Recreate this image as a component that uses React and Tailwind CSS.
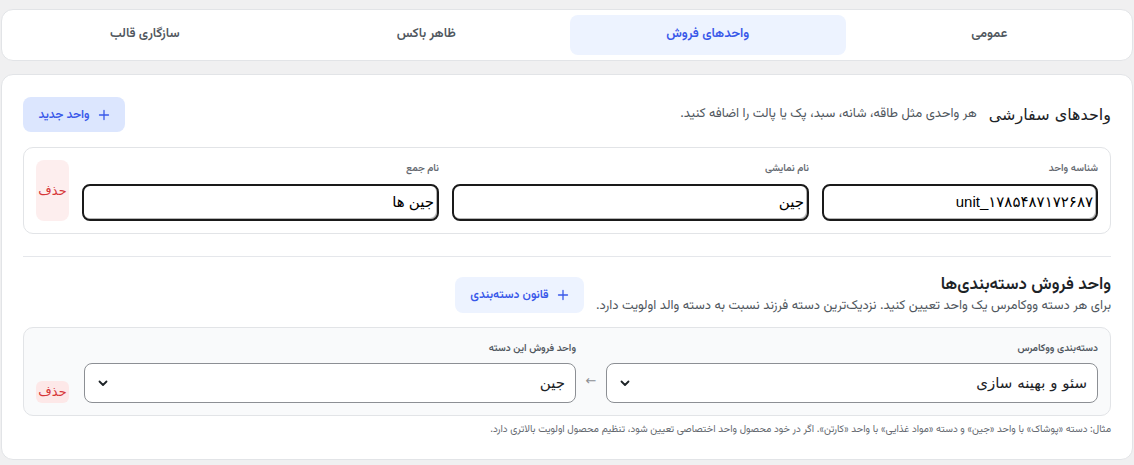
import React from "react";

const font = { fontFamily: '"Vazirmatn", "Noto Sans Arabic", "DejaVu Sans", sans-serif' };

function Chevron() {
  return (
    <svg width="12" height="12" viewBox="0 0 12 12" fill="none">
      <path d="M2.5 4.5 L6 8 L9.5 4.5" stroke="#1d2327" strokeWidth="1.8" strokeLinecap="round" strokeLinejoin="round" />
    </svg>
  );
}

function Plus() {
  return (
    <svg width="12" height="12" viewBox="0 0 12 12" fill="none">
      <path d="M6 1.5 V10.5 M1.5 6 H10.5" stroke="currentColor" strokeWidth="1.3" strokeLinecap="round" />
    </svg>
  );
}

function Field({ label, value }) {
  return (
    <div className="flex flex-col">
      <div className="h-[24px] text-[10px] font-semibold text-[#646970] leading-[14px] pt-[2px]">{label}</div>
      <div className="h-[37px] rounded-lg border-2 border-[#1a1a1a] bg-white flex items-center px-[3px] text-[15px] text-black shadow-[inset_-1px_-1px_0_#b5b5b5]" style={{ fontFamily: '"Liberation Sans", "DejaVu Sans", sans-serif' }}>
        <span dir="rtl">{value}</span>
      </div>
    </div>
  );
}

function SelectBox({ label, value }) {
  return (
    <div className="flex-1 flex flex-col">
      <div className="h-[23px] text-[10px] font-semibold text-[#50575e] leading-[14px] pt-[2px]">{label}</div>
      <div className="h-10 rounded-lg border border-[#8c8f94] bg-white flex items-center justify-between pr-[10px] pl-3 text-[15px] text-[#1d2327]">
        <span style={{ fontFamily: '"DejaVu Sans", sans-serif' }}>{value}</span>
        <Chevron />
      </div>
    </div>
  );
}

export default function App() {
  return (
    <div dir="rtl" className="min-h-[465px] w-[1134px] bg-[#f0f0f1] px-[1px] pt-[9px]" style={font}>
      {/* Tabs */}
      <div className="bg-white border border-[#e2e4e7] rounded-xl p-[5px] grid grid-cols-4 gap-[6px]">
        {["عمومی", "واحدهای فروش", "ظاهر باکس", "سازگاری قالب"].map((t, i) => (
          <div
            key={t}
            className={
              "h-10 rounded-lg flex items-center justify-center text-[13px] font-semibold " +
              (i === 1 ? "bg-[#edf3ff] text-[#3858e9]" : "text-[#50575e]")
            }
          >
            {t}
          </div>
        ))}
      </div>

      {/* Main card */}
      <div className="mt-[13px] bg-white border border-[#e2e4e7] rounded-xl px-[21px] pt-[22px] pb-[22px]">
        <div className="flex items-center justify-between h-[35px]">
          <div className="flex items-center gap-3">
            <h2 className="text-[16px] font-medium text-[#1d2327]" style={{ fontFamily: '"DejaVu Sans", sans-serif' }}>واحدهای سفارشی</h2>
            <p className="text-[13px] text-[#50575e]">هر واحدی مثل طاقه، شانه، سبد، پک یا پالت را اضافه کنید.</p>
          </div>
          <button className="h-[35px] w-[102px] rounded-lg bg-[#dce6fe] text-[#3858e9] text-[12px] font-semibold flex items-center justify-center gap-2">
            <Plus />
            <span>واحد جدید</span>
          </button>
        </div>

        <div className="mt-[15px] border border-[#e2e4e7] rounded-[10px] p-3 grid grid-cols-[276px_1fr_1fr_33px] gap-[13px]">
          <Field label="شناسه واحد" value="unit_۱۷۸۵۴۸۷۱۷۲۶۸۷" />
          <Field label="نام نمایشی" value="جین" />
          <Field label="نام جمع" value="جین ها" />
          <button className="rounded-lg bg-[#fdeeee] text-[#d63638] text-[13px] flex items-center justify-center" style={{ fontFamily: '"DejaVu Sans", sans-serif' }}>
            حذف
          </button>
        </div>

        <div className="mt-[22px] border-t border-[#e5e7eb]" />

        <div className="mt-[17px] flex items-center gap-3">
          <div>
            <h3 className="text-[17px] leading-[22px] font-semibold text-[#1d2327]">واحد فروش دسته‌بندی‌ها</h3>
            <p className="text-[13px] leading-[20px] text-[#50575e]">برای هر دسته ووکامرس یک واحد تعیین کنید. نزدیک‌ترین دسته فرزند نسبت به دسته والد اولویت دارد.</p>
          </div>
          <button className="h-9 w-[129px] rounded-lg bg-[#edf3ff] text-[#3858e9] text-[12px] font-semibold flex items-center justify-center gap-2">
            <Plus />
            <span>قانون دسته‌بندی</span>
          </button>
        </div>

        <div className="mt-[11px] bg-[#f9fafb] border border-[#e2e4e7] rounded-[10px] p-3 flex items-end gap-2">
          <SelectBox label="دسته‌بندی ووکامرس" value="سئو و بهینه سازی" />
          <div className="h-10 w-[14px] flex items-center justify-center text-[#8c8f94] text-[13px]">←</div>
          <SelectBox label="واحد فروش این دسته" value="جین" />
          <button className="mr-[7px] h-[22px] w-[33px] rounded-md bg-[#fde8e8] text-[#d63638] text-[13px] flex items-center justify-center" style={{ fontFamily: '"DejaVu Sans", sans-serif' }}>
            حذف
          </button>
        </div>

        <p className="mt-[6px] text-[10px] text-[#646970]">
          مثال: دسته «پوشاک» با واحد «جین» و دسته «مواد غذایی» با واحد «کارتن». اگر در خود محصول واحد اختصاصی تعیین شود، تنظیم محصول اولویت بالاتری دارد.
        </p>
      </div>
    </div>
  );
}
